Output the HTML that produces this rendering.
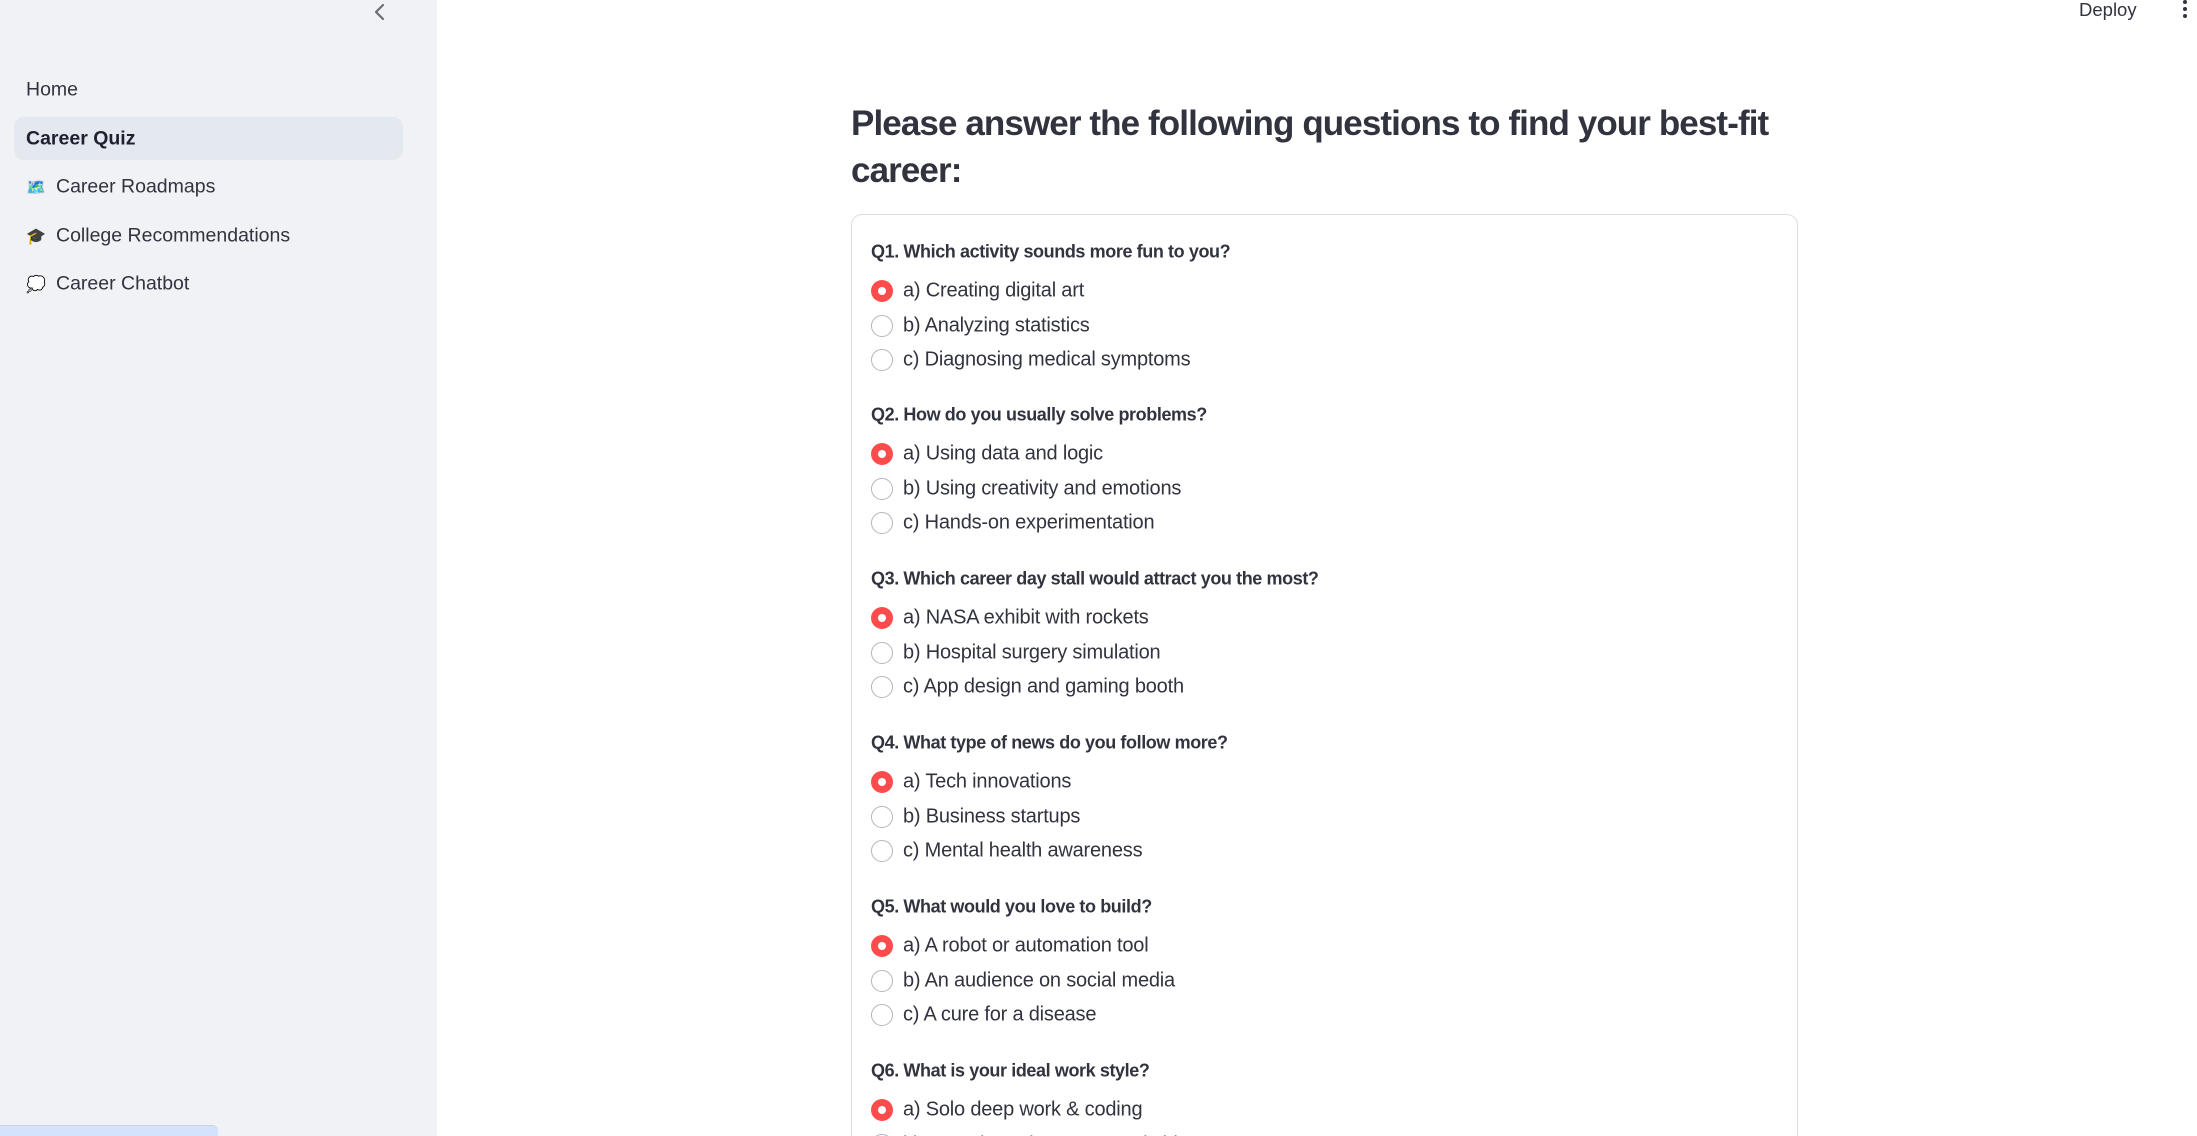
<!DOCTYPE html>
<html><head><meta charset="utf-8">
<style>
*{margin:0;padding:0;box-sizing:border-box}
html,body{width:2197px;height:1136px;overflow:hidden;background:#fff;font-family:"Liberation Sans",sans-serif;color:#31333F}
#w{position:relative;width:2197px;height:1136px;overflow:hidden}
.sb{position:absolute;left:0;top:0;width:437px;height:1136px;background:#f0f2f6;overflow:hidden}
.nav{position:absolute;left:26px;font-size:19.5px;color:#31333F;transform:translateY(-50%);white-space:nowrap}
.sel{position:absolute;left:14px;top:117px;width:389px;height:43px;background:#e4e8ef;border-radius:10px}
.ic{display:inline-block;width:20px;margin-right:10px;font-size:16px}
.t{position:absolute;transform:translateY(-50%);white-space:nowrap}
.q{left:871px;font-size:18px;font-weight:bold;letter-spacing:-0.4px}
.o{left:903px;font-size:20px;letter-spacing:-0.2px}
.r{position:absolute;left:871px;width:22px;height:22px;border-radius:50%;border:1.5px solid #b5b5b9;background:#fff;transform:translateY(-50%)}
.r.on{background:#ff4b4b;border:none}
.r.on:after{content:"";position:absolute;left:7px;top:7px;width:8px;height:8px;border-radius:50%;background:#fff}
</style></head><body><div id="w">
<div class="sb">
<svg style="position:absolute;left:372px;top:3px" width="16" height="18" viewBox="0 0 16 18"><path d="M11 2 L4 9 L11 16" fill="none" stroke="#6b6e78" stroke-width="2.2" stroke-linecap="round" stroke-linejoin="round"/></svg>
<div class="sel"></div>
<div class="nav" style="top:90px">Home</div>
<div class="nav" style="top:139px;font-weight:bold;color:#1f2130">Career Quiz</div>
<div class="nav" style="top:187px"><span class="ic">🗺️</span>Career Roadmaps</div>
<div class="nav" style="top:236px"><span class="ic">🎓</span>College Recommendations</div>
<div class="nav" style="top:284px"><span class="ic">💭</span>Career Chatbot</div>
<div style="position:absolute;left:0;top:1125px;width:218px;height:11px;background:#d3e3fd;border-radius:0 6px 0 0;border-top:1px solid #c9d3e3"></div>
</div>
<div class="t" style="left:2079px;top:10px;font-size:18.5px">Deploy</div>
<svg style="position:absolute;left:2180px;top:0" width="10" height="20"><circle cx="5" cy="2" r="2" fill="#31333F"/><circle cx="5" cy="9" r="2" fill="#31333F"/><circle cx="5" cy="16" r="2" fill="#31333F"/></svg>
<div style="position:absolute;left:851px;top:100px;font-size:35px;font-weight:bold;line-height:47px;width:1000px;letter-spacing:-0.9px">Please answer the following questions to find your best-fit<br>career:</div>
<div style="position:absolute;left:851px;top:214px;width:947px;height:922px;border:1.5px solid #dcdde1;border-bottom:none;border-radius:11px 11px 0 0"></div>

<div class="t q" style="top:252px">Q1. Which activity sounds more fun to you?</div>
<div class="r on" style="top:291px"></div><div class="t o" style="top:291px">a) Creating digital art</div>
<div class="r" style="top:326px"></div><div class="t o" style="top:326px">b) Analyzing statistics</div>
<div class="r" style="top:360px"></div><div class="t o" style="top:360px">c) Diagnosing medical symptoms</div>

<div class="t q" style="top:415px">Q2. How do you usually solve problems?</div>
<div class="r on" style="top:454px"></div><div class="t o" style="top:454px">a) Using data and logic</div>
<div class="r" style="top:489px"></div><div class="t o" style="top:489px">b) Using creativity and emotions</div>
<div class="r" style="top:523px"></div><div class="t o" style="top:523px">c) Hands-on experimentation</div>

<div class="t q" style="top:579px">Q3. Which career day stall would attract you the most?</div>
<div class="r on" style="top:618px"></div><div class="t o" style="top:618px">a) NASA exhibit with rockets</div>
<div class="r" style="top:653px"></div><div class="t o" style="top:653px">b) Hospital surgery simulation</div>
<div class="r" style="top:687px"></div><div class="t o" style="top:687px">c) App design and gaming booth</div>

<div class="t q" style="top:743px">Q4. What type of news do you follow more?</div>
<div class="r on" style="top:782px"></div><div class="t o" style="top:782px">a) Tech innovations</div>
<div class="r" style="top:817px"></div><div class="t o" style="top:817px">b) Business startups</div>
<div class="r" style="top:851px"></div><div class="t o" style="top:851px">c) Mental health awareness</div>

<div class="t q" style="top:907px">Q5. What would you love to build?</div>
<div class="r on" style="top:946px"></div><div class="t o" style="top:946px">a) A robot or automation tool</div>
<div class="r" style="top:981px"></div><div class="t o" style="top:981px">b) An audience on social media</div>
<div class="r" style="top:1015px"></div><div class="t o" style="top:1015px">c) A cure for a disease</div>

<div class="t q" style="top:1071px">Q6. What is your ideal work style?</div>
<div class="r on" style="top:1110px"></div><div class="t o" style="top:1110px">a) Solo deep work &amp; coding</div>
<div class="r" style="top:1145px"></div><div class="t o" style="top:1145px">b) Team-based startups &amp; pitching</div>
</div></body></html>
